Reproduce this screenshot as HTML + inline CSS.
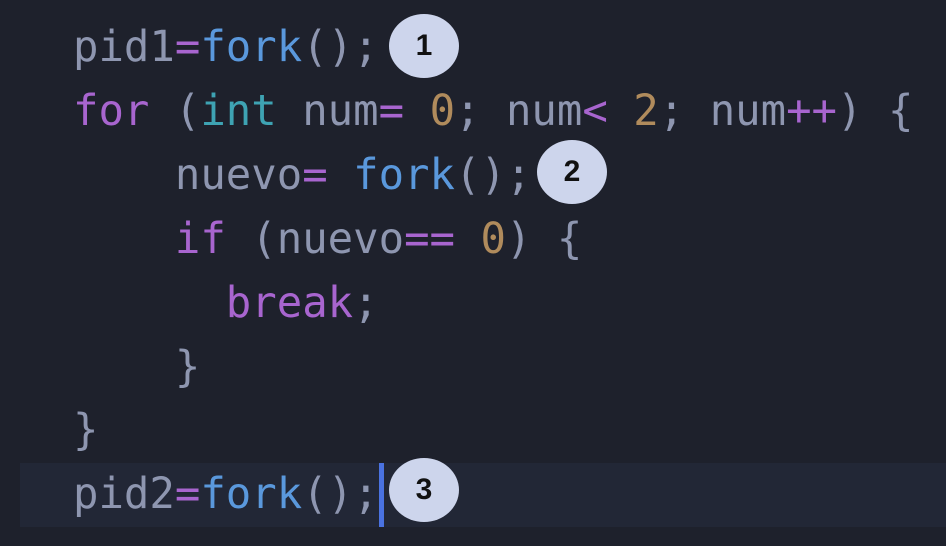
<!DOCTYPE html>
<html><head><style>
html,body{margin:0;padding:0;width:946px;height:546px;background:#1e212c;overflow:hidden}
.hl{position:absolute;left:20px;top:463px;width:926px;height:64px;background:#222736}
.cur{position:absolute;left:379px;top:463px;width:5px;height:64px;background:#4a72e0}
pre{position:absolute;left:73px;top:15px;margin:0;font-family:"DejaVu Sans Mono","Liberation Mono",monospace;font-size:42.3px;line-height:63.9px;color:#8e96b0;letter-spacing:0}
.k{color:#a865cf}.f{color:#5a98dc}.t{color:#3ea3b3}.n{color:#b08b5c}.o{color:#a865cf}
.c{position:absolute;width:70px;height:64px;border-radius:50%;background:#cdd5ec;color:#111;font:bold 30px "Liberation Sans",sans-serif;display:flex;align-items:center;justify-content:center}
</style></head><body>
<div class="hl"></div>
<pre>pid1<span class="o">=</span><span class="f">fork</span>();
<span class="k">for</span> (<span class="t">int</span> num<span class="o">=</span> <span class="n">0</span>; num<span class="o">&lt;</span> <span class="n">2</span>; num<span class="o">++</span>) {
    nuevo<span class="o">=</span> <span class="f">fork</span>();
    <span class="k">if</span> (nuevo<span class="o">==</span> <span class="n">0</span>) {
      <span class="k">break</span>;
    }
}
pid2<span class="o">=</span><span class="f">fork</span>();</pre>
<div class="cur"></div>
<div class="c" style="left:389px;top:14px">1</div>
<div class="c" style="left:537px;top:140px">2</div>
<div class="c" style="left:389px;top:458px">3</div>
</body></html>
